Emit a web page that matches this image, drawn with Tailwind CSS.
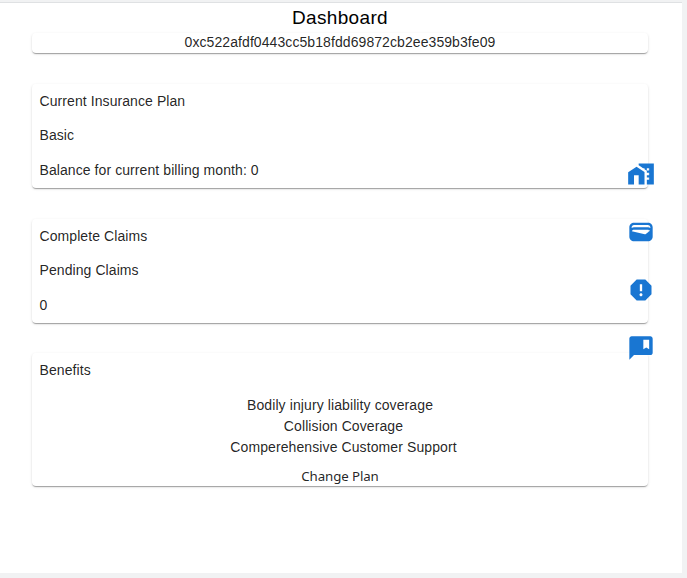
<!DOCTYPE html>
<html lang="en">
<head>
<meta charset="utf-8">
<title>Dashboard</title>
<script src="https://cdn.jsdelivr.net/npm/@tailwindcss/browser@4"></script>
</head>
<body class="h-[578px] overflow-hidden bg-[#f1f2f3] font-['Liberation_Sans',Arial,sans-serif] text-sm tracking-[0.08px] text-black/87">
<div class="relative mt-[2px] mr-[5px] h-[571px] border-t border-[#dfe1e3] bg-white pr-[34px] pl-8">
  <h1 class="pt-[3px] text-center text-[19px] leading-[24px] tracking-[0.35px] text-black">Dashboard</h1>
  <main class="flex flex-col pt-[3px]">
    <section class="h-5 rounded text-center leading-[19px] shadow-[0_2px_1px_-1px_rgba(0,0,0,0.2),0_1px_1px_0_rgba(0,0,0,0.14),0_1px_3px_0_rgba(0,0,0,0.12)]">0xc522afdf0443cc5b18fdd69872cb2ee359b3fe09</section>
    <section class="mt-[31px] flex h-[104px] flex-col gap-[13.5px] rounded px-[7.5px] pt-[6.9px] leading-[21px] shadow-[0_2px_1px_-1px_rgba(0,0,0,0.2),0_1px_1px_0_rgba(0,0,0,0.14),0_1px_3px_0_rgba(0,0,0,0.12)]">
      <p>Current Insurance Plan</p>
      <p>Basic</p>
      <p>Balance for current billing month: 0</p>
    </section>
    <section class="mt-[31px] flex h-[104px] flex-col gap-[13.5px] rounded px-[7.5px] pt-[6.9px] leading-[21px] shadow-[0_2px_1px_-1px_rgba(0,0,0,0.2),0_1px_1px_0_rgba(0,0,0,0.14),0_1px_3px_0_rgba(0,0,0,0.12)]">
      <p>Complete Claims</p>
      <p>Pending Claims</p>
      <p>0</p>
    </section>
    <section class="mt-[30px] h-[133px] rounded px-[7.5px] pt-[7px] leading-[21px] shadow-[0_2px_1px_-1px_rgba(0,0,0,0.2),0_1px_1px_0_rgba(0,0,0,0.14),0_1px_3px_0_rgba(0,0,0,0.12)]">
      <p>Benefits</p>
      <ul class="mt-[14px] pl-[7px] text-center tracking-[0.1px]">
        <li class="pr-[7px]">Bodily injury liability coverage</li>
        <li>Collision Coverage</li>
        <li>Comperehensive Customer Support</li>
      </ul>
      <button class="mx-auto mt-2 block font-['Noto_Sans',sans-serif] text-[13.3px] leading-[21px] tracking-[-0.1px]">Change Plan</button>
    </section>
  </main>
  <nav class="absolute top-[156.5px] right-[27px] flex flex-col gap-[30px] text-[#1976d2]">
    <svg class="size-7" viewBox="0 0 24 24" fill="currentColor"><path d="M8.17 5.7 1 10.48V21h5v-8h4v8h5V10.25z"/><path d="M10 3v1.51l2 1.33L13.73 7H15v.85l2 1.34V11h2v2h-2v2h2v2h-2v4h6V3H10zm9 6h-2V7h2v2z"/></svg>
    <svg class="size-7" viewBox="0 0 24 24" fill="currentColor"><path d="M18 4H6C3.79 4 2 5.79 2 8v8c0 2.21 1.79 4 4 4h12c2.21 0 4-1.79 4-4V8c0-2.21-1.79-4-4-4zm-1.86 9.77c-.24.2-.57.28-.88.2L4.15 11.25C4.45 10.52 5.16 10 6 10h12c.67 0 1.26.34 1.63.84l-3.49 2.93zM6 6h12c1.1 0 2 .9 2 2v.55c-.59-.34-1.27-.55-2-.55H6c-.73 0-1.41.21-2 .55V8c0-1.1.9-2 2-2z"/></svg>
    <svg class="size-7" viewBox="0 0 24 24" fill="currentColor"><path d="M15.73 3H8.27L3 8.27v7.46L8.27 21h7.46L21 15.73V8.27L15.73 3zM12 17.3c-.72 0-1.3-.58-1.3-1.3s.58-1.3 1.3-1.3 1.3.58 1.3 1.3-.58 1.3-1.3 1.3zm1-4.3h-2V7h2v6z"/></svg>
    <svg class="size-7" viewBox="0 0 24 24" fill="currentColor"><path d="M20 2H4c-1.1 0-2 .9-2 2v18l4-4h14c1.1 0 2-.9 2-2V4c0-1.1-.9-2-2-2zm-1 11-2.5-1.5L14 13V5h5v8z"/></svg>
  </nav>
</div>
</body>
</html>
